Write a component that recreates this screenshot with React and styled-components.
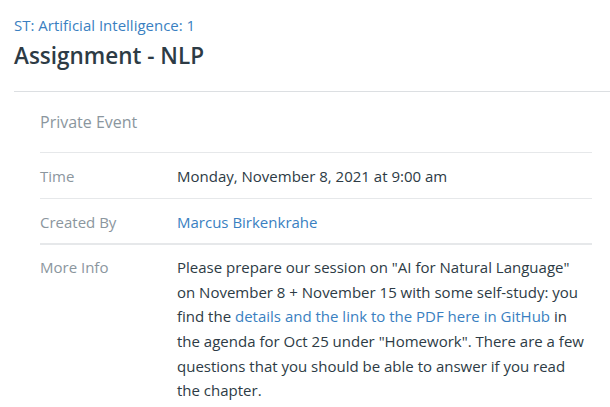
import React from "react";
import styled, { createGlobalStyle } from "styled-components";

const GlobalStyle = createGlobalStyle`
  body {
    margin: 0;
    background: #fff;
    font-family: "Open Sans", "Noto Sans", sans-serif;
    color: #2d3b45;
    overflow-x: hidden;
  }
`;

const rows = [
  { label: "Time", value: "Monday, November 8, 2021 at 9:00 am" },
  { label: "Created By", value: "Marcus Birkenkrahe", link: true },
];

function App() {
  return (
    <Page>
      <GlobalStyle />
      <Header>
        <Context href="#">ST: Artificial Intelligence: 1</Context>
        <Title>Assignment - NLP</Title>
      </Header>
      <Details>
        <Kind>Private Event</Kind>
        {rows.map((r) => (
          <Row key={r.label}>
            <Label>{r.label}</Label>
            <Value>{r.link ? <Link href="#">{r.value}</Link> : r.value}</Value>
          </Row>
        ))}
        <Row $thick>
          <Label>More Info</Label>
          <Info>
            Please prepare our session on "AI for Natural Language"
            <br />
            on November 8 + November 15 with some self-study: you
            <br />
            find the <Link href="#">details and the link to the PDF here in GitHub</Link> in
            <br />
            the agenda for Oct 25 under "Homework". There are a few
            <br />
            questions that you should be able to answer if you read
            <br />
            the chapter.
          </Info>
        </Row>
      </Details>
    </Page>
  );
}

const Page = styled.div`
  padding: 15px 0 0 14px;
`;

const Header = styled.div`
  border-bottom: 1px solid #dcdfe2;
  padding-bottom: 20px;
`;

const Context = styled.a`
  display: block;
  font-size: 15px;
  line-height: 20px;
  color: #3a7fc1;
  text-decoration: none;
`;

const Title = styled.h1`
  margin: 6px 0 0;
  font-size: 22.5px;
  line-height: 30px;
  font-weight: 600;
  color: #2d3b45;
`;

const Details = styled.div`
  margin: 0 18px 0 26px;
`;

const Kind = styled.div`
  padding: 19px 0 19px;
  font-size: 16px;
  line-height: 22px;
  color: #8b969e;
`;

const Row = styled.div`
  display: grid;
  grid-template-columns: 137px 1fr;
  padding: ${(p) => (p.$thick ? "10px 0 9px" : "11px 0 9px")};
  border-top: ${(p) => (p.$thick ? "2px solid #e6e8ea" : "1px solid #e6e8ea")};
`;

const Label = styled.div`
  font-size: 15px;
  line-height: 24.6px;
  color: #8b969e;
`;

const Value = styled.div`
  font-size: 15px;
  line-height: 24.6px;
  color: #2d3b45;
`;

const Info = styled(Value)`
  white-space: nowrap;
`;

const Link = styled.a`
  color: #3a7fc1;
  text-decoration: none;
`;

export default App;
